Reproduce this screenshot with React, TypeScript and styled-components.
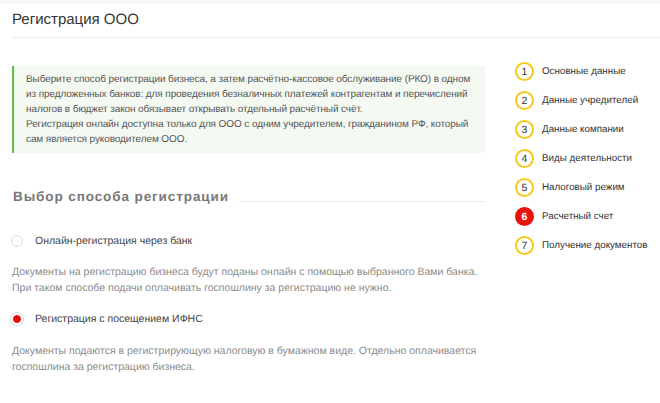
import React from "react";
import styled, { createGlobalStyle } from "styled-components";

const GlobalStyle = createGlobalStyle`
  body {
    margin: 0;
    background: #fff;
    font-family: "Liberation Sans", Arial, sans-serif;
    text-rendering: geometricPrecision;
  }
`;

const steps = [
  "Основные данные",
  "Данные учредителей",
  "Данные компании",
  "Виды деятельности",
  "Налоговый режим",
  "Расчетный счет",
  "Получение документов",
];
const activeStep = 6;

export default function App() {
  return (
    <>
      <GlobalStyle />
      <Page>
        <TopBand />
        <Header>Регистрация ООО</Header>
        <Content>
          <Main>
            <InfoBox>
              Выберите способ регистрации бизнеса, а затем расчётно-кассовое обслуживание (РКО) в одном
              <br />
              из предложенных банков: для проведения безналичных платежей контрагентам и перечислений
              <br />
              налогов в бюджет закон обязывает открывать отдельный расчётный счёт.
              <br />
              Регистрация онлайн доступна только для ООО с одним учредителем, гражданином РФ, который
              <br />
              сам является руководителем ООО.
            </InfoBox>

            <SectionTitle>
              <span>Выбор способа регистрации</span>
              <Rule />
            </SectionTitle>

            <RadioRow $top={26}>
              <Radio $checked={false} />
              <RadioLabel>Онлайн-регистрация через банк</RadioLabel>
            </RadioRow>
            <Description $top={16}>
              Документы на регистрацию бизнеса будут поданы онлайн с помощью выбранного Вами банка.
              <br />
              При таком способе подачи оплачивать госпошлину за регистрацию не нужно.
            </Description>

            <RadioRow $top={15}>
              <Radio $checked />
              <RadioLabel>Регистрация с посещением ИФНС</RadioLabel>
            </RadioRow>
            <Description $top={17}>
              Документы подаются в регистрирующую налоговую в бумажном виде. Отдельно оплачивается
              <br />
              госпошлина за регистрацию бизнеса.
            </Description>
          </Main>

          <Steps>
            {steps.map((title, i) => (
              <Step key={title}>
                <StepNum $active={i + 1 === activeStep}>{i + 1}</StepNum>
                <StepTitle>{title}</StepTitle>
              </Step>
            ))}
          </Steps>
        </Content>
      </Page>
    </>
  );
}

const Page = styled.div`
  width: 660px;
  height: 403px;
  overflow: hidden;
  background: #fff;
`;

const TopBand = styled.div`
  height: 4px;
  background: #f9f8f5;
`;

const Header = styled.h1`
  margin: 0 0 0 12px;
  padding: 6px 0 7px;
  font-size: 15px;
  line-height: 20px;
  font-weight: normal;
  color: #333;
  border-bottom: 1px solid #ebebeb;
`;

const Content = styled.div`
  display: flex;
  gap: 30px;
  padding-left: 12px;
`;

const Main = styled.div`
  width: 473px;
  flex-shrink: 0;
`;

const InfoBox = styled.div`
  margin-top: 28px;
  padding: 6px 12px;
  border-left: 2px solid #5cbf47;
  background: #f4f9f2;
  font-size: 10px;
  letter-spacing: -0.1px;
  line-height: 15px;
  color: #555;
  white-space: nowrap;
`;

const SectionTitle = styled.div`
  display: flex;
  align-items: flex-end;
  gap: 10px;
  margin-top: 34px;
  padding-left: 1px;
  font-size: 13.5px;
  line-height: 20px;
  font-weight: bold;
  letter-spacing: 0.9px;
  color: #787878;
  white-space: nowrap;
`;

const Rule = styled.div`
  flex: 1;
  height: 1px;
  margin-bottom: 5px;
  background: #ececec;
`;

const RadioRow = styled.label<{ $top: number }>`
  display: flex;
  align-items: center;
  gap: 12px;
  margin-top: ${(p) => p.$top}px;
  height: 16px;
`;

const Radio = styled.span<{ $checked: boolean }>`
  box-sizing: border-box;
  width: 12px;
  height: 12px;
  border-radius: 50%;
  background: #fff;
  border: ${(p) => (p.$checked ? "2px solid #fff" : "1px solid #dcdcdc")};
  box-shadow: ${(p) => (p.$checked ? "0 0 0 1px #ddd, inset 0 0 0 4px #e30f0f" : "none")};
  margin-left: -1px;
`;

const RadioLabel = styled.span`
  font-size: 10.5px;
  color: #444;
`;

const Description = styled.p<{ $top: number }>`
  margin: ${(p) => p.$top}px 0 0;
  font-size: 10.5px;
  line-height: 15.5px;
  color: #8c8c8c;
  white-space: nowrap;
`;

const Steps = styled.ol`
  list-style: none;
  margin: 0;
  padding: 19px 0 0;
`;

const Step = styled.li`
  display: flex;
  align-items: center;
  gap: 8px;
  height: 29px;
`;

const StepNum = styled.span<{ $active: boolean }>`
  box-sizing: border-box;
  width: 19px;
  height: 19px;
  border-radius: 50%;
  display: flex;
  align-items: center;
  justify-content: center;
  font-size: 10.5px;
  border: 2px solid ${(p) => (p.$active ? "#e5140f" : "#f7c81c")};
  background: ${(p) => (p.$active ? "#e5140f" : "#fff")};
  color: ${(p) => (p.$active ? "#fff" : "#333")};
  font-weight: ${(p) => (p.$active ? "bold" : "normal")};
`;

const StepTitle = styled.span`
  font-size: 9.8px;
  color: #333;
  white-space: nowrap;
`;
